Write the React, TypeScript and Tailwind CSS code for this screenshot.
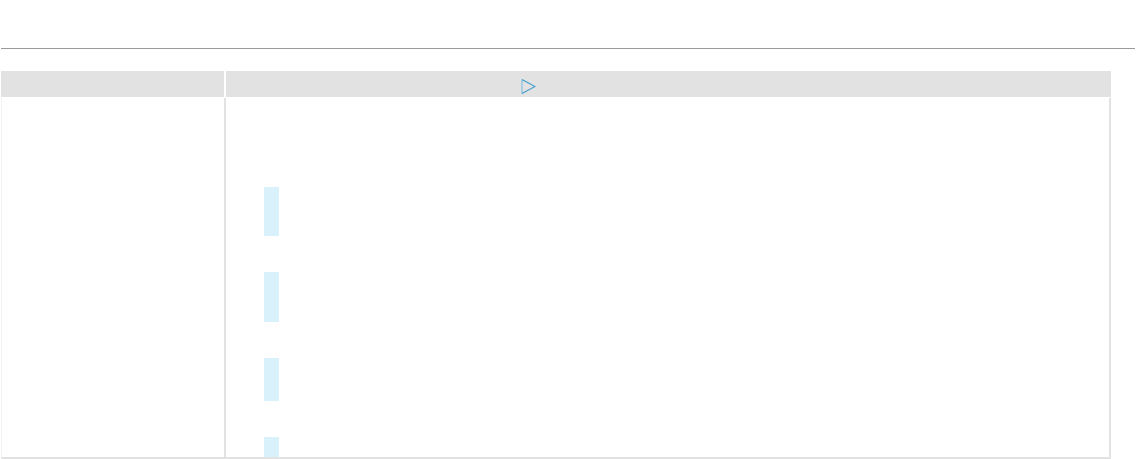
export default function App() {
  const bars = [
    { top: 89, h: 49 },
    { top: 36, h: 50 },
    { top: 36, h: 43 },
    { top: 36, h: 20 },
  ];
  return (
    <div className="w-[1136px] h-[459px] bg-white overflow-hidden font-['Liberation_Sans',sans-serif]">
      {/* top bar with rule */}
      <div className="h-[49px] mx-[1px] border-b border-[#9a9a9a]" />

      {/* table */}
      <div className="mt-[22px] ml-[1px] w-[1110px] flex flex-col">
        <div className="flex h-[26px] gap-[2px]">
          <div className="w-[223px] bg-[#e2e2e2]" />
          <div className="flex-1 bg-[#e2e2e2] flex items-start pt-[8px] pl-[295px]">
            <svg width="15" height="15" viewBox="0 0 15 15">
              <path d="M1 0.5 L1 14.5" stroke="#93c6e2" strokeWidth="1.4" />
              <path d="M1 0.5 L14 7.5 L1 14.5" fill="none" stroke="#3e9bcb" strokeWidth="1.1" />
            </svg>
          </div>
        </div>
        <div className="flex h-[361px] mt-[1px] border-b-2 border-[#e2e2e2] border-l border-l-[#f2f2f2]">
          <div className="w-[222px] bg-white" />
          <div className="w-[2px] bg-[#e2e2e2]" />
          <div className="flex-1 border-r-2 border-[#e2e2e2] flex flex-col pl-[38px]">
            {bars.map((b, i) => (
              <div
                key={i}
                className="w-[15px] bg-[#d8f1fa]"
                style={{ marginTop: b.top, height: b.h }}
              />
            ))}
          </div>
        </div>
      </div>
    </div>
  );
}
